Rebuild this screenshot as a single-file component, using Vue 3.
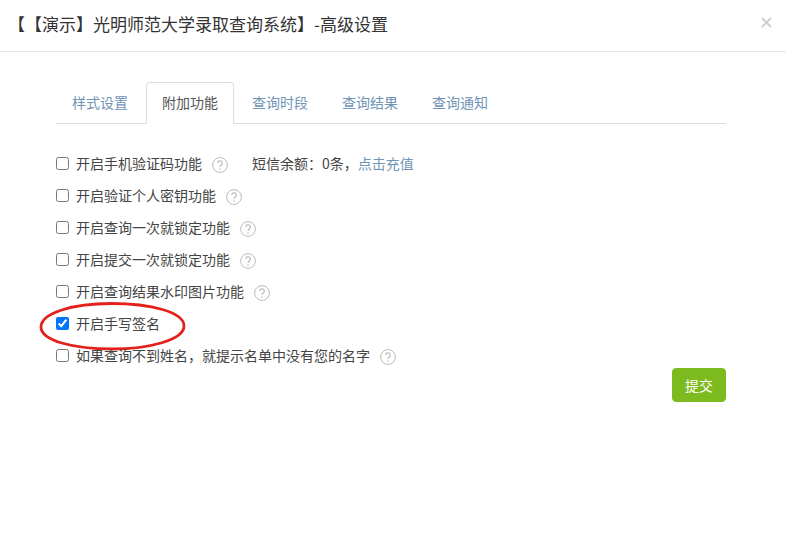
<script setup>
const tabs = [
  { label: '样式设置' },
  { label: '附加功能', active: true },
  { label: '查询时段' },
  { label: '查询结果' },
  { label: '查询通知' }
]
const options = [
  { label: '开启手机验证码功能', help: true, sms: true },
  { label: '开启验证个人密钥功能', help: true },
  { label: '开启查询一次就锁定功能', help: true },
  { label: '开启提交一次就锁定功能', help: true },
  { label: '开启查询结果水印图片功能', help: true },
  { label: '开启手写签名', checked: true, circled: true },
  { label: '如果查询不到姓名，就提示名单中没有您的名字', help: true }
]
</script>

<template>
  <div class="modal">
    <header class="head">
      <h1 class="title">【【演示】光明师范大学录取查询系统】-高级设置</h1>
      <svg class="close" width="11" height="11" viewBox="0 0 11 11" aria-label="关闭">
        <path d="M1 1l9 9M10 1l-9 9" stroke="#cfcfcf" stroke-width="2" fill="none" />
      </svg>
    </header>
    <main class="body">
      <nav class="tabs">
        <a v-for="t in tabs" :key="t.label" class="tab" :class="{ active: t.active }">{{ t.label }}</a>
      </nav>
      <form class="form" @submit.prevent>
        <div v-for="o in options" :key="o.label" class="row">
          <label class="opt">
            <input type="checkbox" class="check" :checked="o.checked" />
            <span>{{ o.label }}</span>
          </label>
          <svg v-if="o.help" class="help" width="16" height="16" viewBox="0 0 16 16">
            <circle cx="8" cy="8" r="7.4" fill="none" stroke="#bbb" stroke-width="1" />
            <path d="M5.7 6.1a2.3 2.3 0 1 1 3.6 1.9c-.9.6-1.3 1-1.3 2" fill="none" stroke="#bbb" stroke-width="1.2" />
            <circle cx="8" cy="12.1" r=".8" fill="#bbb" />
          </svg>
          <span v-if="o.sms" class="sms">短信余额：0条，<a class="link">点击充值</a></span>
          <svg v-if="o.circled" class="ring" width="150" height="52" viewBox="0 0 150 52">
            <path d="M72 3.5C112 3.5 145 12 145 26c0 14-35 23-72 23C36 49 2 41 2 27 2 13 34 3.5 72 3.5Z" fill="none" stroke="#e3201a" stroke-width="2.8" />
          </svg>
        </div>
        <div class="actions">
          <button class="submit" type="submit">提交</button>
        </div>
      </form>
    </main>
  </div>
</template>

<style scoped>
.modal {
  width: 786px;
  height: 543px;
  background: #fff;
  color: #444;
  font-family: "Noto Sans CJK SC", "Liberation Sans", sans-serif;
  text-spacing-trim: space-all;
  overflow: hidden;
}
.head {
  height: 51px;
  box-sizing: content-box;
  border-bottom: 1px solid #e5e5e5;
  display: flex;
  align-items: center;
  justify-content: space-between;
  padding: 0 14px 0 8px;
}
.title {
  margin: 0;
  font-size: 17px;
  font-weight: 400;
  color: #333;
  line-height: 24px;
  position: relative;
  top: -2px;
}
.close {
  position: relative;
  top: -3px;
}
.body {
  padding: 30px 60px 0 56px;
}
.tabs {
  display: flex;
  height: 42px;
  box-sizing: border-box;
  border-bottom: 1px solid #ddd;
}
.tab {
  height: 42px;
  box-sizing: border-box;
  padding: 0 15px;
  margin-right: 2px;
  font-size: 14px;
  line-height: 38px;
  color: #6f94b5;
  border: 1px solid transparent;
  border-radius: 4px 4px 0 0;
  white-space: nowrap;
}
.tab.active {
  color: #555;
  background: #fff;
  border-color: #ddd #ddd #fff;
}
.form {
  padding-top: 24px;
}
.row {
  position: relative;
  display: flex;
  align-items: center;
  height: 32px;
  font-size: 14px;
  line-height: 20px;
  color: #444;
}
.opt {
  display: flex;
  align-items: center;
}
.opt span {
  position: relative;
  top: -1px;
}
.sms {
  position: relative;
  top: -1px;
  margin-left: 24px;
}
.check {
  width: 13px;
  height: 13px;
  margin: 0 7px 0 0;
  position: relative;
  top: -1px;
}
.help {
  margin-left: 10px;
  position: relative;
  top: 1px;
}
.link {
  color: #6f94b5;
}
.ring {
  position: absolute;
  left: -17px;
  top: -8px;
  pointer-events: none;
}
.actions {
  display: flex;
  justify-content: flex-end;
  margin-top: -4px;
}
.submit {
  width: 54px;
  height: 34px;
  padding: 0;
  border: 1px solid #7cba1d;
  border-radius: 4px;
  background: #7cba1d;
  color: #fff;
  font-family: inherit;
  font-size: 14px;
}
</style>

<style>
html, body { background: #fff; }
</style>
